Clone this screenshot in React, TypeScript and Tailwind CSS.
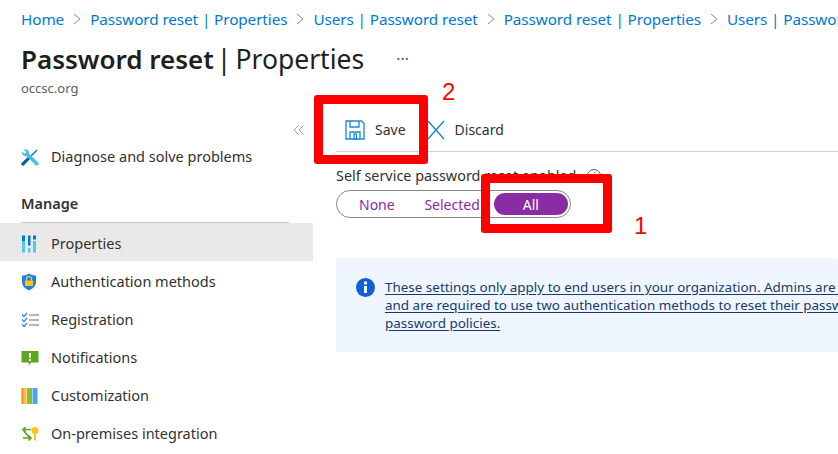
import type { ReactNode } from "react";

const font = "font-['Noto_Sans','Open_Sans',sans-serif]";

function Chevron() {
  return (
    <svg width="10" height="12" viewBox="0 0 10 12" className="mx-[8px] shrink-0" fill="none" stroke="#8a8886" strokeWidth="1">
      <path d="M2 1l6 5-6 5" />
    </svg>
  );
}

function Crumbs() {
  const items = ["Home", "Password reset | Properties", "Users | Password reset", "Password reset | Properties", "Users | Password reset"];
  return (
    <div className="flex h-[20px] items-center whitespace-nowrap pl-[21px] text-[15.300px] tracking-[-0.1px] text-[#0078d4]">
      {items.map((t, i) => (
        <span key={i} className="flex items-center">
          {i > 0 && <Chevron />}
          {t}
        </span>
      ))}
    </div>
  );
}

function ToolsIcon() {
  return (
    <svg width="18" height="18" viewBox="0 0 18 18">
      {/* screwdriver, bottom-left to top-right */}
      <path d="M15.500 1.500l1 1L10 9l-1-1z" fill="#1c6fb5" />
      <path d="M0.800 14.800L7.500 8.500l2 2-6.500 6.700a1.500 1.500 0 0 1-2.200-2.400z" fill="#0f5c9e" />
      {/* wrench, top-left to bottom-right */}
      <path d="M0.800 3.500L3.300 6l2-2L2.800 1.500A3.800 3.800 0 0 1 8 5.800l9 8.700a1.700 1.700 0 0 1-2.500 2.500L5.500 8A3.800 3.800 0 0 1 .8 3.500z" fill="#3fc1ee" />
    </svg>
  );
}

function PropsIcon() {
  return (
    <svg width="16" height="18" viewBox="0 0 16 18">
      <rect x="1" y="0.500" width="3" height="6" fill="#0078d4" />
      <rect x="1" y="6.500" width="3" height="11" fill="#50c8ef" />
      <rect x="7" y="0.500" width="2.500" height="10" fill="#0078d4" />
      <rect x="7" y="13" width="2.500" height="4.500" fill="#50c8ef" />
      <rect x="12" y="0.500" width="3" height="4" fill="#0078d4" />
      <rect x="12" y="6" width="3" height="11.500" fill="#50c8ef" />
    </svg>
  );
}

function ShieldIcon() {
  return (
    <svg width="16" height="18" viewBox="0 0 16 18">
      <path d="M8 0.500c2 1.500 4.500 2 7 2v6.500c0 4-3.500 7-7 8.500-3.500-1.500-7-4.500-7-8.500V2.500c2.500 0 5-.5 7-2z" fill="#1f7fe0" />
      <path d="M5.500 7.500V6a2.500 2.500 0 0 1 5 0v1.500" fill="none" stroke="#f3d36b" strokeWidth="1.200" />
      <rect x="4" y="7.500" width="8" height="5.500" rx="0.500" fill="#fcc419" />
    </svg>
  );
}

function ChecksIcon() {
  return (
    <svg width="18" height="16" viewBox="0 0 18 16" fill="none">
      <path d="M1 2.500l2 2 3-3.500M1 7.500l2 2 3-3.500M1 12.500l2 2 3-3.500" stroke="#2e8ee6" strokeWidth="1.400" />
      <path d="M8 3h10M8 8h10M8 13h10" stroke="#a19f9d" strokeWidth="1.500" />
    </svg>
  );
}

function NoticeIcon() {
  return (
    <svg width="18" height="15" viewBox="0 0 18 15">
      <path d="M0.500 0h17v11.500H10L7.700 14.500V11.500H0.500z" fill="#5ea51f" />
      <rect x="8" y="2" width="2" height="5" fill="#fff" />
      <rect x="8" y="8" width="2" height="2" fill="#fff" />
    </svg>
  );
}

function BooksIcon() {
  return (
    <svg width="17" height="16" viewBox="0 0 17 16">
      <rect x="0.500" width="5" height="16" fill="#fcc22e" />
      <rect x="0.500" width="2" height="16" fill="#f7941d" />
      <rect x="6" width="5" height="16" fill="#86bd35" />
      <rect x="11.500" width="5" height="16" fill="#4aa3ef" />
    </svg>
  );
}

function PremIcon() {
  return (
    <svg width="18" height="14" viewBox="0 0 18 14">
      {/* top arrow points left, bottom arrow points right */}
      <path d="M10 2.500H2M4.500 0L2 2.500 4.500 5M2 11h8M7.500 8.500L10 11l-2.500 2.500" fill="none" stroke="#5ea51f" strokeWidth="1.600" />
      <path d="M2.500 3.500L8 10" fill="none" stroke="#5ea51f" strokeWidth="1.600" />
      <circle cx="14" cy="3.500" r="3.500" fill="#fcc419" />
      <rect x="13" y="6" width="2" height="7.500" fill="#fcc419" />
    </svg>
  );
}

function NavItem({ icon, label, active }: { icon: ReactNode; label: string; active?: boolean }) {
  return (
    <div className={`flex h-[38px] items-center pl-[21px] pt-[4px] text-[14.500px] text-[#323130] ${active ? "bg-[#ebe9e8]" : ""}`}>
      <span className="flex w-[30px] shrink-0 items-center">{icon}</span>
      {label}
    </div>
  );
}

function Sidebar() {
  return (
    <aside className="w-[313px] shrink-0 pt-[27px]">
      <NavItem icon={<ToolsIcon />} label="Diagnose and solve problems" />
      <div className="ml-[21px] mr-[24px] mt-[11px] flex h-[38px] items-center border-b border-[#c8c6c4] text-[14.500px] font-semibold text-[#323130]">
        Manage
      </div>
      <NavItem icon={<PropsIcon />} label="Properties" active />
      <NavItem icon={<ShieldIcon />} label="Authentication methods" />
      <NavItem icon={<ChecksIcon />} label="Registration" />
      <NavItem icon={<NoticeIcon />} label="Notifications" />
      <NavItem icon={<BooksIcon />} label="Customization" />
      <NavItem icon={<PremIcon />} label="On-premises integration" />
    </aside>
  );
}

function Toolbar() {
  return (
    <div className="ml-[23px] flex h-[43px] items-center border-b border-[#d2d0ce] pb-[1px] text-[14px] text-[#323130]">
      <svg width="20" height="20" viewBox="0 0 20 20" fill="none" stroke="#1a86d9" strokeWidth="1.300" className="ml-[9px]">
        <path d="M1 1h15.500L19 3.500V19H1z" />
        <path d="M5 1v6h9V1M5 19v-7h10v7" />
        <rect x="9" y="14" width="2.500" height="5" />
      </svg>
      <span className="ml-[10px]">Save</span>
      <svg width="20" height="20" viewBox="0 0 20 20" fill="none" stroke="#1a86d9" strokeWidth="1.400" className="ml-[20px]">
        <path d="M2 1l16 18M18 1L2 19" />
      </svg>
      <span className="ml-[9px]">Discard</span>
    </div>
  );
}

function Pills() {
  return (
    <div className="mt-[4px] flex h-[28px] w-[235px] items-center rounded-full border border-[#8a8886] px-[2px] text-[14px] text-[#8a2da5]">
      <span className="w-[78px] pl-[20px]">None</span>
      <span className="w-[78px] pl-[8px]">Selected</span>
      <span className="flex h-[22px] w-[75px] items-center justify-center rounded-full bg-[#8a2da5] text-white">All</span>
    </div>
  );
}

function InfoBox() {
  return (
    <div className="mt-[40px] flex h-[94px] rounded-[2px] bg-[#eff6ff] pl-[20px] pt-[20px]">
      <svg width="19" height="19" viewBox="0 0 19 19" className="shrink-0">
        <circle cx="9.500" cy="9.500" r="9.500" fill="#0e5fd8" />
        <rect x="8" y="8" width="3" height="7" fill="#fff" />
        <circle cx="9.500" cy="5" r="1.700" fill="#fff" />
      </svg>
      <p className="ml-[10px] whitespace-nowrap text-[13.450px] leading-[18px] text-[#1b3a6b] underline underline-offset-2">
        These settings only apply to end users in your organization. Admins are always enabled for self-service password reset
        <br />
        and are required to use two authentication methods to reset their password. Click here to learn more about administrator
        <br />
        password policies.
      </p>
    </div>
  );
}

export default function App() {
  return (
    <div className={`relative h-[454px] w-[838px] overflow-hidden bg-white pt-[9px] ${font}`}>
      <Crumbs />
      <div className="mt-[12px] flex items-center whitespace-nowrap pl-[21px] leading-[36px] text-[#201f1e]">
        <span className="text-[26px] font-semibold">Password reset</span>
        <span className="ml-[3px] text-[26.500px]">|</span>
        <span className="ml-[4px] text-[26.500px]">Properties</span>
        <span className="ml-[32px] text-[16px] leading-none text-[#605e5c]">···</span>
      </div>
      <div className="mt-[1px] pl-[21px] text-[13px] leading-[20px] text-[#605e5c]">occsc.org</div>

      <div className="mt-[11px] flex">
        <Sidebar />
        <main className="min-w-0 flex-1">
          <Toolbar />
          <div className="pl-[23px] pt-[14px]">
            <div className="flex h-[20px] items-center whitespace-nowrap text-[14.400px] text-[#323130]">
              Self service password reset enabled
              <span className="ml-[11px] flex h-[14px] w-[14px] items-center justify-center rounded-full border border-[#605e5c] text-[10px] leading-none">i</span>
            </div>
            <Pills />
            <InfoBox />
          </div>
        </main>
      </div>

      {/* collapse chevrons sit on the sidebar edge */}
      <svg width="12" height="10" viewBox="0 0 12 10" fill="none" stroke="#a19f9d" className="absolute left-[293px] top-[125px]">
        <path d="M5.500 0.500L1 5l4.500 4.500M10.500 0.500L6 5l4.500 4.500" />
      </svg>

      {/* red annotations */}
      <div className="absolute left-[314px] top-[95px] h-[69px] w-[114px] rounded-[3px] border-[9px] border-[#ff0000]" />
      <div className="absolute left-[481px] top-[174px] h-[59px] w-[131px] rounded-[3px] border-[9px] border-[#ff0000]" />
      <span className="absolute left-[442px] top-[78px] font-['Liberation_Sans',sans-serif] text-[24px] leading-[28px] text-[#ff0000]">2</span>
      <span className="absolute left-[634px] top-[212px] font-['Liberation_Sans',sans-serif] text-[24px] leading-[28px] text-[#ff0000]">1</span>
    </div>
  );
}
